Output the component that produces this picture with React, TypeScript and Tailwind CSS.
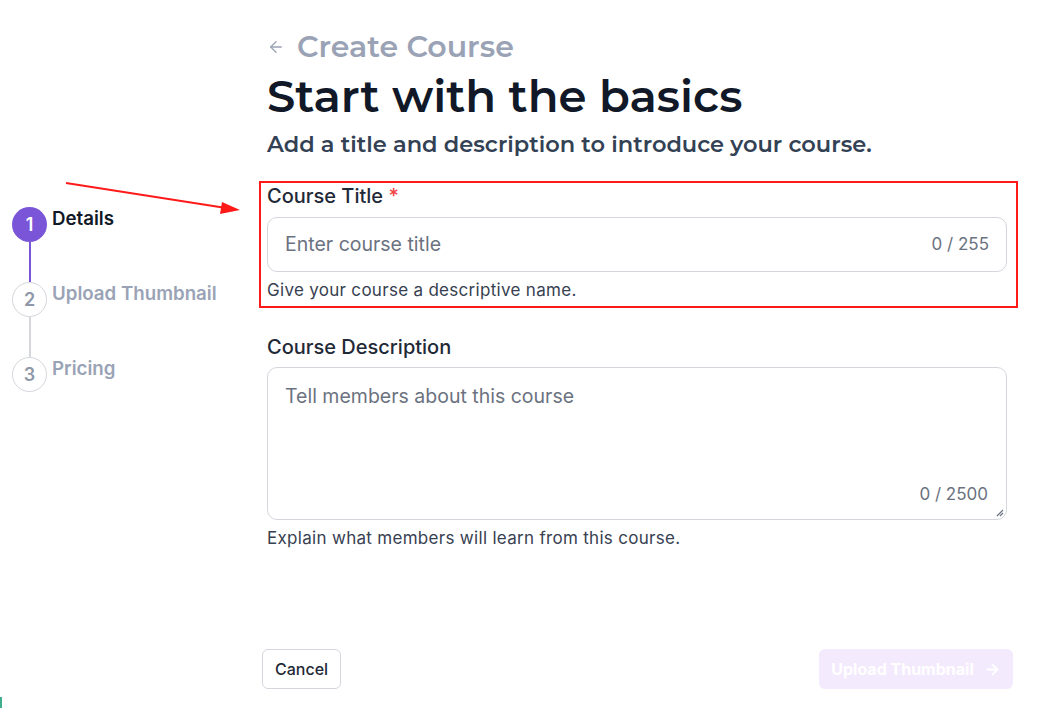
import { ArrowLeft, ArrowRight } from "lucide-react";

const steps = [
  { n: 1, label: "Details", active: true },
  { n: 2, label: "Upload Thumbnail", active: false },
  { n: 3, label: "Pricing", active: false },
];

function Stepper() {
  return (
    <div className="w-[267px] shrink-0 pl-3 pt-[207px]">
      {steps.map((step, i) => (
        <div key={step.n} className="flex">
          <div className="flex flex-col items-center">
            <div
              className={
                step.active
                  ? "flex h-[35px] w-[35px] items-center justify-center rounded-full bg-[#7b55d8] text-[18px] font-semibold text-white"
                  : "flex h-[35px] w-[35px] items-center justify-center rounded-full border border-[#d4d6dc] bg-white text-[18px] font-semibold text-[#8f98a8]"
              }
            >
              {step.n}
            </div>
            {i < steps.length - 1 && (
              <div
                className={
                  step.active ? "h-[40px] w-[2px] bg-[#7b55d8]" : "h-[40px] w-[2px] bg-[#d4d6dc]"
                }
              />
            )}
          </div>
          <p
            className={
              step.active
                ? "ml-[5px] text-[18.7px] font-semibold leading-[24px] text-[#111827]"
                : "ml-[5px] text-[18.7px] font-semibold leading-[24px] text-[#9aa3b5]"
            }
          >
            {step.label}
          </p>
        </div>
      ))}
    </div>
  );
}

export default function App() {
  return (
    <div className="relative h-[718px] w-[1047px] overflow-hidden bg-white font-['Inter',sans-serif]">
      <div className="flex">
        <Stepper />

        <div className="w-[740px] pt-[28px]">
          <div className="flex items-center gap-[12px] font-['Montserrat','DejaVu_Sans',sans-serif]">
            <ArrowLeft className="h-[18px] w-[18px] text-[#9aa3b5]" strokeWidth={1.75} />
            <span className="text-[30px] font-semibold leading-[38px] text-[#9aa3b5]">Create Course</span>
          </div>
          <h1 className="mt-[1px] font-['Montserrat','DejaVu_Sans',sans-serif] text-[45px] font-semibold leading-[58px] text-[#111827]">
            Start with the basics
          </h1>
          <p className="mt-[5px] font-['Montserrat','DejaVu_Sans',sans-serif] text-[22.5px] font-semibold leading-[28px] text-[#334155]">
            Add a title and description to introduce your course.
          </p>

          <div className="mt-[25px]">
            <label className="block text-[20px] font-medium leading-[26px] text-[#1f2937]">
              Course Title <span className="text-[#ef4444]">*</span>
            </label>
            <div className="mt-[8px] flex h-[55px] items-center rounded-[10px] border border-[#d4d6dc] px-[17px]">
              <span className="flex-1 text-[19.5px] text-[#6b7280]">Enter course title</span>
              <span className="text-[17px] text-[#6b7280]">0 / 255</span>
            </div>
            <p className="mt-[7px] text-[17px] leading-[22px] tracking-[0.3px] text-[#374151]">
              Give your course a descriptive name.
            </p>
          </div>

          <div className="mt-[33px]">
            <label className="block text-[20px] font-medium leading-[26px] text-[#1f2937]">Course Description</label>
            <div className="relative mt-[7px] h-[153px] rounded-[10px] border border-[#d4d6dc] px-[17px] pt-[14px]">
              <span className="text-[19.5px] text-[#6b7280]">Tell members about this course</span>
              <span className="absolute bottom-[12px] right-[18px] text-[17px] text-[#6b7280]">0 / 2500</span>
              <svg className="absolute bottom-[2px] right-[2px]" width="9" height="9" viewBox="0 0 9 9">
                <path d="M8 2 L2 8 M8 5 L5 8" stroke="#6b7280" strokeWidth="1.2" />
              </svg>
            </div>
            <p className="mt-[7px] text-[17px] leading-[22px] tracking-[0.3px] text-[#374151]">
              Explain what members will learn from this course.
            </p>
          </div>

          <div className="mt-[100px] flex items-center justify-between">
            <button className="-ml-[5px] h-[40px] rounded-[6px] border border-[#d4d6dc] bg-white px-[12px] text-[16px] font-medium text-[#1f2937]">
              Cancel
            </button>
            <button className="-mr-[6px] flex h-[40px] w-[194px] items-center justify-center gap-[10px] rounded-[6px] bg-[#f4eafd] text-[16px] font-bold text-white">
              Upload Thumbnail
              <ArrowRight className="h-[17px] w-[17px]" strokeWidth={2.5} />
            </button>
          </div>
        </div>
      </div>

      {/* annotation overlay */}
      <div className="pointer-events-none absolute left-[259px] top-[181px] h-[127px] w-[759px] border-2 border-[#ff1a1a]" />
      <svg className="pointer-events-none absolute left-0 top-0" width="260" height="230">
        <line x1="66" y1="183" x2="226" y2="208" stroke="#ff1a1a" strokeWidth="2" />
        <polygon points="240,210 222,202 220,214" fill="#ff1a1a" />
      </svg>
      <div className="absolute left-0 top-[697px] h-[11px] w-[2px] bg-[#3fae8f]" />
    </div>
  );
}
